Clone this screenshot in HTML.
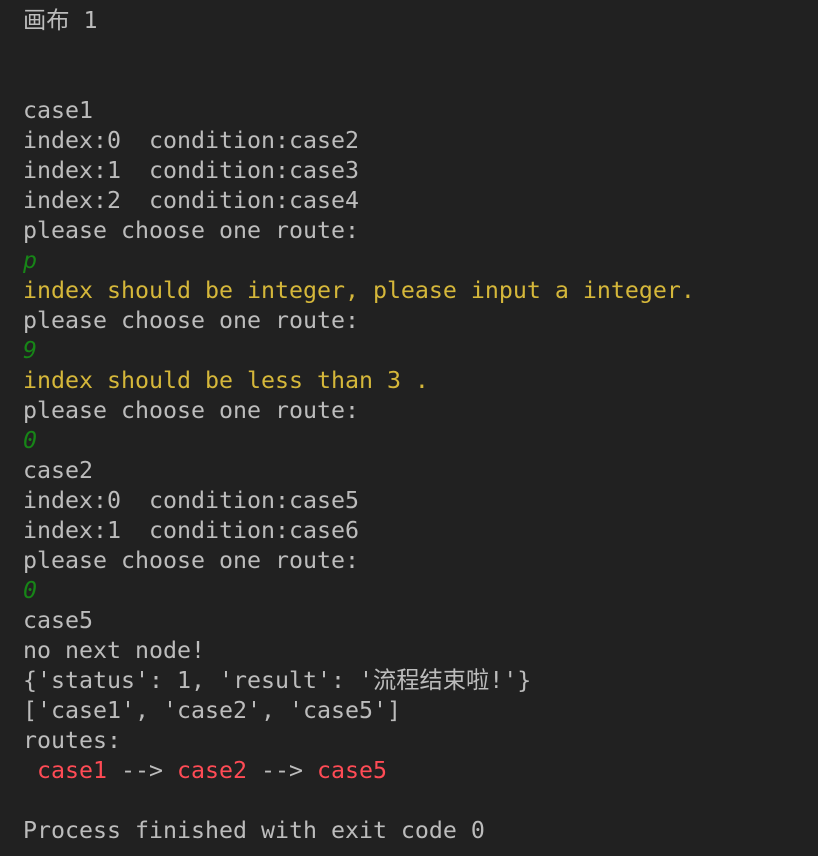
<!DOCTYPE html>
<html><head><meta charset="utf-8"><style>
html,body{margin:0;padding:0;background:#212121;width:818px;height:856px;overflow:hidden}
pre{margin:0;position:absolute;left:23px;top:6px;font-family:"DejaVu Sans Mono","Noto Sans CJK SC",monospace;font-size:23.25px;line-height:30px;color:#bcbcbc;white-space:pre}
.y{color:#d5b73a}.g{color:#178517;font-style:italic}.r{color:#ff4b55}
</style></head><body>
<pre>画布 1


case1
index:0  condition:case2
index:1  condition:case3
index:2  condition:case4
please choose one route:
<span class="g">p</span>
<span class="y">index should be integer, please input a integer.</span>
please choose one route:
<span class="g">9</span>
<span class="y">index should be less than 3 .</span>
please choose one route:
<span class="g">0</span>
case2
index:0  condition:case5
index:1  condition:case6
please choose one route:
<span class="g">0</span>
case5
no next node!
{'status': 1, 'result': '流程结束啦!'}
['case1', 'case2', 'case5']
routes:
 <span class="r">case1</span> --&gt; <span class="r">case2</span> --&gt; <span class="r">case5</span>

Process finished with exit code 0</pre>
</body></html>
